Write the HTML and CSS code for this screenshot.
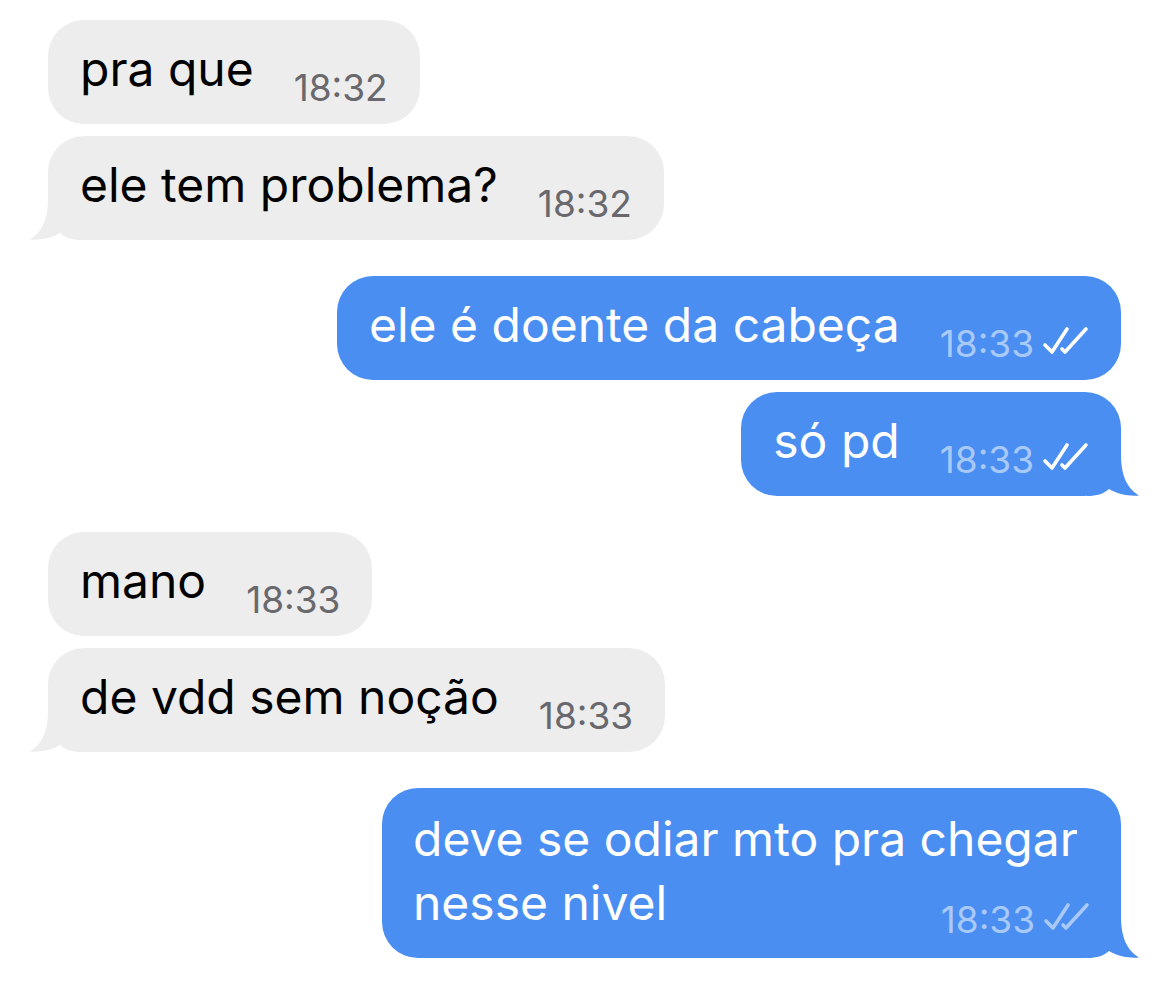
FILE: index.html
```html
<!DOCTYPE html>
<html lang="pt">
<head>
<meta charset="utf-8">
<title>Chat</title>
<link rel="stylesheet" href="styles.css">
</head>
<body>
<svg class="defs" width="0" height="0" aria-hidden="true">
  <defs>
    <path id="tail-shape" d="M18 0 L18 8 C18 30 12 42 0 49.5 C10 50.5 22 48 30 43 C36 48 42 50 52 50 L52 0 Z"/>
    <g id="ticks">
      <path d="M4 19 L11 26 L26 3" />
      <path d="M21 23 L24 26 L45 3" />
    </g>
  </defs>
</svg>
<main class="chat">
  <section class="group in">
    <div class="bubble">
      <span class="text">pra que</span>
      <span class="meta"><span class="time">18:32</span></span>
    </div>
    <div class="bubble has-tail">
      <span class="text">ele tem problema?</span>
      <span class="meta"><span class="time">18:32</span></span>
      <svg class="tail" viewBox="0 0 52 50"><use href="#tail-shape"/></svg>
    </div>
  </section>

  <section class="group out">
    <div class="bubble">
      <span class="text">ele é doente da cabeça</span>
      <span class="meta"><span class="time">18:33</span><svg class="check" viewBox="0 0 48 30"><use href="#ticks"/></svg></span>
    </div>
    <div class="bubble has-tail">
      <span class="text">só pd</span>
      <span class="meta"><span class="time">18:33</span><svg class="check" viewBox="0 0 48 30"><use href="#ticks"/></svg></span>
      <svg class="tail" viewBox="0 0 52 50"><use href="#tail-shape"/></svg>
    </div>
  </section>

  <section class="group in">
    <div class="bubble">
      <span class="text">mano</span>
      <span class="meta"><span class="time">18:33</span></span>
    </div>
    <div class="bubble has-tail">
      <span class="text">de vdd sem noção</span>
      <span class="meta"><span class="time">18:33</span></span>
      <svg class="tail" viewBox="0 0 52 50"><use href="#tail-shape"/></svg>
    </div>
  </section>

  <section class="group out">
    <div class="bubble multi has-tail">
      <span class="text line">deve se odiar mto pra chegar</span>
      <div class="last-line">
        <span class="text line">nesse nivel</span>
        <span class="meta"><span class="time">18:33</span><svg class="check dim" viewBox="0 0 48 30"><use href="#ticks"/></svg></span>
      </div>
      <svg class="tail" viewBox="0 0 52 50"><use href="#tail-shape"/></svg>
    </div>
  </section>
</main>
</body>
</html>
```

FILE: styles.css
```css
* { box-sizing: border-box; }

html, body {
  margin: 0;
  padding: 0;
  background: #ffffff;
}

body {
  font-family: Inter, "Noto Sans", "Liberation Sans", sans-serif;
  -webkit-font-smoothing: antialiased;
}

.defs {
  position: absolute;
  width: 0;
  height: 0;
  overflow: hidden;
}

.chat {
  display: flex;
  flex-direction: column;
  gap: 36px;
  padding: 20px 49px 0 48px;
}

.group {
  display: flex;
  flex-direction: column;
  gap: 12px;
}

.group.in { align-items: flex-start; }
.group.out { align-items: flex-end; }

.bubble {
  position: relative;
  display: flex;
  align-items: flex-end;
  height: 104px;
  padding: 20px 32px 16px 32px;
  border-radius: 36px;
}

.in .bubble { background: #ededed; color: #000; }
.out .bubble { background: #4a8ef1; color: #fff; }

.text {
  margin: 0 0 10px 0;
  font-size: 48px;
  line-height: 58px;
  white-space: nowrap;
}

.meta {
  display: flex;
  align-items: center;
  margin-left: 40px;
  line-height: 40px;
}

.time {
  font-size: 37px;
  line-height: 40px;
}

.in .time { color: #68686d; }
.out .time { color: #a9c9f8; }

.check {
  width: 48px;
  height: 30px;
  margin-left: 7px;
  margin-bottom: 6px;
  fill: none;
  stroke: #ffffff;
  stroke-width: 3.6;
  stroke-linecap: round;
  stroke-linejoin: round;
}

.check.dim { stroke: #a9c9f8; }

.tail {
  position: absolute;
  bottom: 0;
  width: 52px;
  height: 50px;
}

.in .tail {
  left: -18px;
  fill: #ededed;
}

.out .tail {
  right: -18px;
  fill: #4a8ef1;
  transform: scaleX(-1);
}

.bubble.multi {
  flex-direction: column;
  align-items: stretch;
  height: 170px;
  width: 739px;
  padding: 19px 31px 18px 31px;
}

.bubble.multi .line {
  display: block;
  line-height: 64px;
  margin: 0;
}

.last-line {
  display: flex;
  justify-content: space-between;
  align-items: flex-start;
}

.last-line .meta {
  margin: 29px 0 0 0;
}
```
